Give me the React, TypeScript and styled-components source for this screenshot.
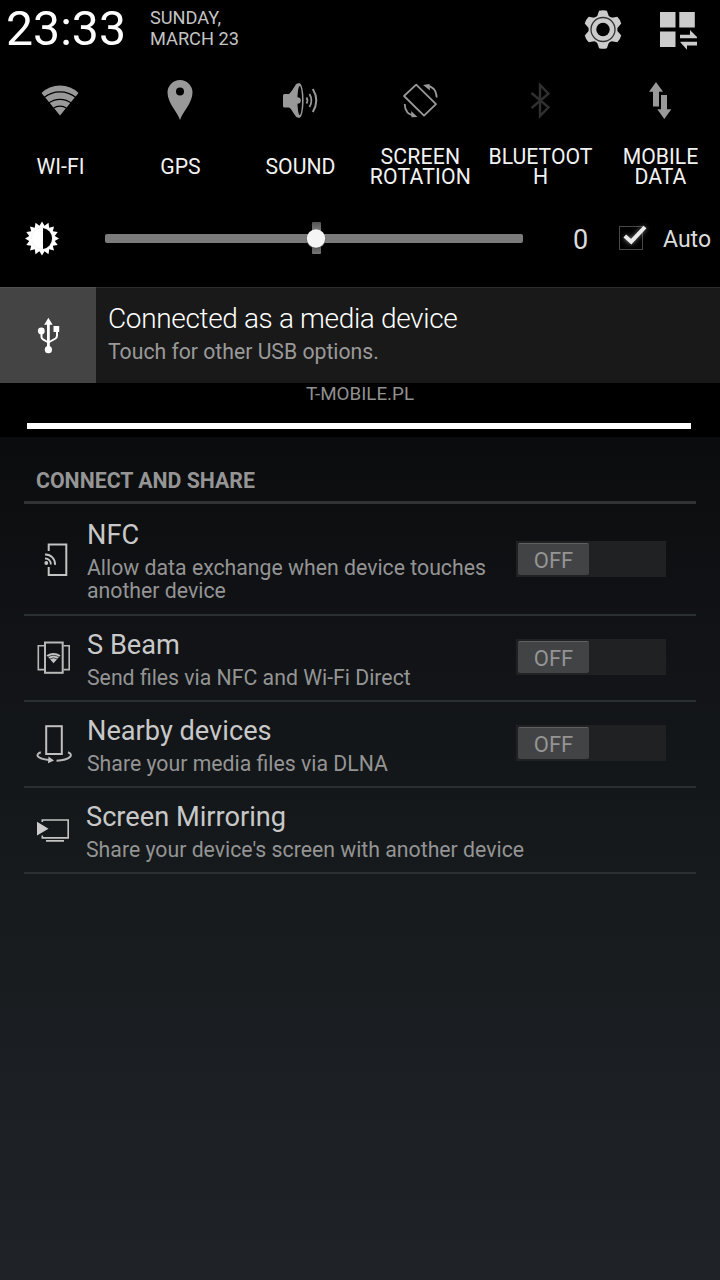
import React from "react";
import styled, { createGlobalStyle } from "styled-components";

const GlobalStyle = createGlobalStyle`
  * { box-sizing: border-box; }
  body { margin: 0; background: #000; }
`;

const Screen = styled.div`
  width: 720px;
  height: 1280px;
  display: flex;
  flex-direction: column;
  overflow: hidden;
  background: #000;
  color: #fff;
  font-family: Roboto, "Liberation Sans", sans-serif;
`;

const Icon = styled.svg<{ $w: number; $h: number }>`
  display: block;
  flex: none;
  width: ${(p) => p.$w}px;
  height: ${(p) => p.$h}px;
`;

/* Status header */
const Header = styled.header`
  height: 60px;
  display: flex;
  align-items: flex-start;
  padding: 0 20px 0 6px;
`;

const Clock = styled.div`
  width: 144px;
  padding-top: 1px;
  font-size: 48.2px;
  line-height: 56px;
  white-space: nowrap;
`;

const DateText = styled.div`
  flex: 1;
  padding-top: 7px;
  font-size: 18.2px;
  line-height: 21px;
  color: #c4c4c4;
`;

const HeaderIcons = styled.div`
  display: flex;
  gap: 34px;
  padding-top: 8px;
`;

/* Quick toggles */
const Toggles = styled.div`
  height: 140px;
  display: grid;
  grid-template-columns: repeat(6, 120px);
`;

const Toggle = styled.div`
  display: flex;
  flex-direction: column;
  align-items: center;
  padding-top: 20px;
`;

const ToggleLabel = styled.div<{ $spacing: number }>`
  height: 48px;
  margin: 19px 0 0 1px;
  display: flex;
  flex-direction: column;
  justify-content: center;
  text-align: center;
  white-space: pre;
  font-size: 21.2px;
  line-height: 20px;
  letter-spacing: ${(p) => p.$spacing}px;
  color: #f2f2f2;
`;

/* Brightness */
const Brightness = styled.div`
  height: 87px;
  display: flex;
  align-items: center;
  padding: 0 9px 10px 24px;
`;

const Level = styled.div`
  width: 96px;
  text-align: center;
  padding: 3px 0 0 20px;
  font-size: 27px;
  line-height: 32px;
  color: #dcdcdc;
`;

const AutoLabel = styled.div`
  margin-left: 13px;
  font-size: 23px;
  line-height: 28px;
  padding-top: 2px;
  color: #dcdcdc;
`;

const Slider = styled.div`
  margin-left: 45px;
`;

/* Notification */
const Notification = styled.div`
  height: 96px;
  display: flex;
  background: #191919;
  border-top: 1px solid #2b2b2b;
`;

const NotificationIcon = styled.div`
  width: 96px;
  margin-top: -1px;
  padding: 26px 0 0 34px;
  background: #444;
  border-top: 1px solid #505050;
`;

const NotificationText = styled.div`
  padding: 14px 0 0 12px;
`;

const NotificationTitle = styled.div`
  font-weight: 300;
  font-size: 28px;
  line-height: 33px;
  letter-spacing: -0.35px;
`;

const NotificationDetail = styled.div`
  margin-top: 5px;
  font-size: 21.2px;
  line-height: 24px;
  color: #999;
`;

/* Carrier strip */
const Carrier = styled.div`
  height: 54px;
  display: flex;
  flex-direction: column;
  align-items: center;
  font-size: 18.8px;
  line-height: 22px;
  color: #909090;
`;

const Handle = styled.div`
  width: 664px;
  height: 6px;
  margin: 18px 2px 0 0;
  background: #fff;
`;

/* Settings */
const Settings = styled.main`
  flex: 1;
  padding: 30px 24px 0;
  background: linear-gradient(#0b0c0e 0%, #111316 25%, #161a1c 52%, #1c1f23 78%, #1f2226 100%);
`;

const SectionTitle = styled.h2`
  margin: 0;
  height: 37px;
  padding: 2px 0 0 12px;
  border-bottom: 3px solid #303234;
  font-size: 21.3px;
  line-height: 24px;
  font-weight: 700;
  color: #959595;
`;

const Row = styled.div<{ $h: number }>`
  height: ${(p) => p.$h}px;
  display: flex;
  align-items: center;
  padding-left: 11px;
  border-bottom: 2px solid #2c2f31;
`;

const RowText = styled.div<{ $inset: number }>`
  flex: 1;
  padding: 2px 0 0 ${(p) => p.$inset}px;
  white-space: pre;
`;

const RowTitle = styled.div`
  font-size: 27.2px;
  line-height: 33px;
  color: #c8c8c8;
`;

const RowDetail = styled.div`
  margin-top: 4px;
  font-size: 21.25px;
  line-height: 23px;
  color: #949494;
`;

const Switch = styled.div<{ $lift: number }>`
  width: 150px;
  height: 36px;
  margin: 0 30px ${(p) => p.$lift}px 0;
  padding: 2px;
  background: #202122;
`;

const Thumb = styled.div`
  width: 71px;
  height: 32px;
  border-radius: 2px;
  border-top: 1px solid #606060;
  background: #424344;
  color: #949494;
  text-align: center;
  font-size: 22px;
  line-height: 34px;
`;

const WifiToggle = () => (
  <Icon $w={40} $h={44} viewBox="40 80 40 44">
    <path d="M60 115.500 L41.500 93 Q49 85.500 60 85.500 T78.500 93Z" fill="#999" />
    <g fill="none" stroke="#000" strokeWidth="1.200">
      <path d="M44 97.500 Q51 91.800 60 91.800 T76 97.500" />
      <path d="M48 103.500 Q53.500 99.300 60 99.300 T72 103.500" />
      <path d="M53 108.500 Q56.500 106.200 60 106.200 T67 108.500" />
    </g>
  </Icon>
);

const GpsToggle = () => (
  <Icon $w={40} $h={44} viewBox="160 80 40 44">
    <path
      d="M180 120 C177.500 112 167.500 103 167.500 92.500 A12.500 12.500 0 0 1 192.500 92.500 C192.500 103 182.500 112 180 120Z"
      fill="#999"
    />
    <circle cx="180" cy="91.500" r="4" fill="#000" />
  </Icon>
);

const SoundToggle = () => (
  <Icon $w={40} $h={44} viewBox="280 80 40 44">
    <path d="M284.500 94 H289 C292 92 294 86 297 83.500 H299.500 V117.500 H297 C294 115 292 109 289 107.500 H284.500 Q283 107.500 283 106 V95.500 Q283 94 284.500 94Z" fill="#999" />
    <ellipse cx="299.300" cy="100.500" rx="4.300" ry="17.300" fill="#999" />
    <ellipse cx="299.700" cy="100.500" rx="2.300" ry="14.500" fill="#000" />
    <circle cx="297.500" cy="100.500" r="3.300" fill="#999" />
    <g fill="none" stroke="#999">
      <path d="M306.500 97.500 Q308.300 100.500 306.500 103.500" strokeWidth="1.800" />
      <path d="M309.500 94 Q313.300 100.500 309.500 107" strokeWidth="1.800" />
      <path d="M312.800 89 Q319.800 100.500 312.800 112" strokeWidth="2" />
    </g>
  </Icon>
);

const RotationToggle = () => (
  <Icon $w={40} $h={44} viewBox="400 80 40 44">
    <g fill="none" stroke="#999" strokeWidth="1.800">
      <path d="M416.200 84.700 L436 104.200 L424 115.700 L404 96Z" strokeLinejoin="round" />
      <path d="M426 85.700 Q436 86.500 436.700 97.500" />
      <path d="M404.700 104 Q405 114.500 414.500 115.700" />
    </g>
    <path d="M423 85 L429.500 84 L430 90.500Z M417.500 117 L411.500 117.300 L411 111Z" fill="#999" />
  </Icon>
);

const BluetoothToggle = () => (
  <Icon $w={40} $h={44} viewBox="520 80 40 44">
    <path
      d="M531.500 93 L548.500 107.300 L540 116 V85 L548.500 93.700 L531.500 108"
      fill="none"
      stroke="#303030"
      strokeWidth="2.400"
    />
  </Icon>
);

const DataToggle = () => (
  <Icon $w={40} $h={44} viewBox="640 80 40 44">
    <path d="M656 82 L663 91.800 H659 V106.500 H653 V91.800 H649Z" fill="#999" />
    <path d="M661 95 H667 V109.300 H671.300 L664.300 119 L657.300 109.300 H661Z" fill="#999" />
  </Icon>
);

const GearIcon = () => (
  <Icon $w={40} $h={44} viewBox="-20 -21.5 40 44">
    <g fill="#ccc">
      <circle r="14.400" />
      {[0, 60, 120, 180, 240, 300].map((a) => (
        <path key={a} d="M-6.300 -12 L-3.900 -18.800 Q0 -19.900 3.900 -18.800 L6.300 -12Z" transform={`rotate(${a})`} />
      ))}
    </g>
    <circle r="12" fill="none" stroke="#333" strokeWidth="1.300" />
    <circle r="6.700" fill="#000" />
  </Icon>
);

const PanelIcon = () => (
  <Icon $w={43} $h={44} viewBox="657 8 43 44">
    <g fill="#ccc">
      <path d="M660 12h15.500v15.500h-15.500z M679.300 12h15.500v15.500h-15.500z M660 31.500h15.500v15.500h-15.500z" />
      <path d="M680 34.700 H690 V30 L697 37 V38.200 H680Z" />
      <path d="M697 41.700 H680.500 V42.500 L687 49.700 V45.400 H697Z" />
    </g>
  </Icon>
);

const sunPoints = Array.from({ length: 32 }, (_, i) => {
  const r = i % 2 ? 13 : 17;
  const a = (i * Math.PI) / 16;
  return `${(Math.sin(a) * r).toFixed(2)},${(-Math.cos(a) * r).toFixed(2)}`;
}).join(" ");

const SunIcon = () => (
  <Icon $w={36} $h={36} viewBox="-18 -17.5 36 36">
    <polygon points={sunPoints} fill="#fff" />
    <circle r="10.600" fill="none" stroke="#e0e0e0" strokeWidth=".4" />
    <path d="M1 -10.400 A10.500 10.500 0 0 1 1 10.400Z" fill="#000" />
  </Icon>
);

const SliderTrack = () => (
  <Icon $w={418} $h={36} viewBox="105 221 418 36">
    <defs>
      <linearGradient id="notch" x1="0" y1="0" x2="0" y2="1">
        <stop offset="0" stopColor="#555" />
        <stop offset=".25" stopColor="#777" />
        <stop offset=".75" stopColor="#555" />
        <stop offset="1" stopColor="#777" />
      </linearGradient>
    </defs>
    <rect x="105" y="234" width="418" height="9" rx="2" fill="#7b7b7b" />
    <rect x="312" y="222" width="9" height="32" rx="1" fill="url(#notch)" />
    <circle cx="316" cy="239" r="9.600" fill="#555" />
    <circle cx="316" cy="238.500" r="9.200" fill="#f5f5f5" />
  </Icon>
);

const CheckIcon = () => (
  <Icon $w={32} $h={36} viewBox="618 221 32 36">
    <defs>
      <filter id="glow" x="-50%" y="-50%" width="200%" height="200%">
        <feGaussianBlur stdDeviation="2.5" />
      </filter>
    </defs>
    <rect x="619.500" y="226.500" width="23" height="23" fill="none" stroke="#484848" />
    <path d="M625 236.500 L631 242 L645 227" fill="none" stroke="#777" strokeWidth="4" filter="url(#glow)" />
    <path d="M624.800 236 L631.200 241.700 L645 227" fill="none" stroke="#ebebeb" strokeWidth="4" />
  </Icon>
);

const UsbIcon = () => (
  <Icon $w={30} $h={44} viewBox="34 314 30 44">
    <path d="M48.400 317.700 L52.600 324.700 H44.200Z" fill="#fff" />
    <path d="M48.400 324 V350" stroke="#fff" strokeWidth="2.800" />
    <path d="M41.500 331 V337 Q41.500 338.500 43 339.300 L48.400 342.500 M57 330 V335.500 Q57 337.500 55.500 338.500 L48.400 342.500" fill="none" stroke="#fff" strokeWidth="2" />
    <circle cx="48.400" cy="349.700" r="3.600" fill="#fff" />
    <circle cx="41.300" cy="331" r="3.400" fill="#fff" />
    <rect x="53.500" y="326" width="5.700" height="6" fill="#fff" />
  </Icon>
);

const NfcIcon = () => (
  <Icon $w={40} $h={40} viewBox="35 539 40 40">
    <g fill="none" stroke="#c4c4c4" strokeWidth="2">
      <path d="M48.700 551 V544.500 H66.300 V575 H48.700 V567" />
      <path d="M45 558.500 A5.500 5.500 0 0 1 50.800 564.500" strokeWidth="1.800" />
      <path d="M45 554.500 A9.500 9.500 0 0 1 55 564.800" strokeWidth="1.800" />
    </g>
    <circle cx="46.300" cy="563" r="1.900" fill="#c4c4c4" />
  </Icon>
);

const BeamIcon = () => (
  <Icon $w={40} $h={40} viewBox="35 638 40 40">
    <g fill="none" stroke="#b8b8b8" strokeWidth="1.600">
      <rect x="45" y="642.500" width="17.700" height="30.300" strokeWidth="2" />
      <path d="M44 645.800 H38.300 V669.600 H44 M63.500 645.800 H69.200 V669.600 H63.500" />
    </g>
    <path d="M53.500 663.200 L46.500 655.300 Q53.500 650.800 60.500 655.300Z" fill="#c4c4c4" />
    <g fill="none" stroke="#141619" strokeWidth=".7">
      <path d="M47.500 657.300 Q53.500 653.300 59.500 657.300" />
      <path d="M49 659.300 Q53.500 656.300 58 659.300" />
    </g>
  </Icon>
);

const NearbyIcon = () => (
  <Icon $w={40} $h={42} viewBox="35 723 40 42">
    <rect x="46.200" y="726.200" width="15.600" height="27.800" fill="none" stroke="#c0c0c0" strokeWidth="2" />
    <g fill="none" stroke="#b8b8b8" strokeWidth="2">
      <path d="M40.800 752.300 C35 754.500 36 758.500 49 760" />
      <path d="M68 752.300 C74 754.500 71 760 56.500 760.700" />
    </g>
    <path d="M48.500 756.500 L54 760.500 L48 763.300Z" fill="#c4c4c4" />
  </Icon>
);

const MirrorIcon = () => (
  <Icon $w={40} $h={40} viewBox="35 810 40 40">
    <path d="M42.300 822 V820 H68.200 V837.900 H42.300 V835.500 M46 840.900 H64" fill="none" stroke="#c4c4c4" strokeWidth="1.600" />
    <path d="M37 821.700 L48.500 828.700 L37 835.500Z" fill="#ccc" />
  </Icon>
);

const toggles = [
  { label: "WI-FI", icon: <WifiToggle />, spacing: 0 },
  { label: "GPS", icon: <GpsToggle />, spacing: 0 },
  { label: "SOUND", icon: <SoundToggle />, spacing: 0 },
  { label: "SCREEN\nROTATION", icon: <RotationToggle />, spacing: 0.2 },
  { label: "BLUETOOT\nH", icon: <BluetoothToggle />, spacing: 0 },
  { label: "MOBILE\nDATA", icon: <DataToggle />, spacing: 0 },
];

const rows = [
  { title: "NFC", detail: "Allow data exchange when device touches\nanother device", icon: <NfcIcon />, h: 112, inset: 12, toggle: true, lift: 0 },
  { title: "S Beam", detail: "Send files via NFC and Wi-Fi Direct", icon: <BeamIcon />, h: 86, inset: 12, toggle: true, lift: 2 },
  { title: "Nearby devices", detail: "Share your media files via DLNA", icon: <NearbyIcon />, h: 86, inset: 12, toggle: true, lift: 2 },
  { title: "Screen Mirroring", detail: "Share your device's screen with another device", icon: <MirrorIcon />, h: 86, inset: 11, toggle: false, lift: 0 },
];

export default function App() {
  return (
    <>
      <GlobalStyle />
      <Screen>
        <Header>
          <Clock>23:33</Clock>
          <DateText>
            SUNDAY,
            <br />
            MARCH 23
          </DateText>
          <HeaderIcons>
            <GearIcon />
            <PanelIcon />
          </HeaderIcons>
        </Header>
        <Toggles>
          {toggles.map((t) => (
            <Toggle key={t.label}>
              {t.icon}
              <ToggleLabel $spacing={t.spacing}>{t.label}</ToggleLabel>
            </Toggle>
          ))}
        </Toggles>
        <Brightness>
          <SunIcon />
          <Slider>
            <SliderTrack />
          </Slider>
          <Level>0</Level>
          <CheckIcon />
          <AutoLabel>Auto</AutoLabel>
        </Brightness>
        <Notification>
          <NotificationIcon>
            <UsbIcon />
          </NotificationIcon>
          <NotificationText>
            <NotificationTitle>Connected as a media device</NotificationTitle>
            <NotificationDetail>Touch for other USB options.</NotificationDetail>
          </NotificationText>
        </Notification>
        <Carrier>
          T-MOBILE.PL
          <Handle />
        </Carrier>
        <Settings>
          <SectionTitle>CONNECT AND SHARE</SectionTitle>
          {rows.map((r) => (
            <Row key={r.title} $h={r.h}>
              {r.icon}
              <RowText $inset={r.inset}>
                <RowTitle>{r.title}</RowTitle>
                <RowDetail>{r.detail}</RowDetail>
              </RowText>
              {r.toggle && (
                <Switch $lift={r.lift}>
                  <Thumb>OFF</Thumb>
                </Switch>
              )}
            </Row>
          ))}
        </Settings>
      </Screen>
    </>
  );
}
